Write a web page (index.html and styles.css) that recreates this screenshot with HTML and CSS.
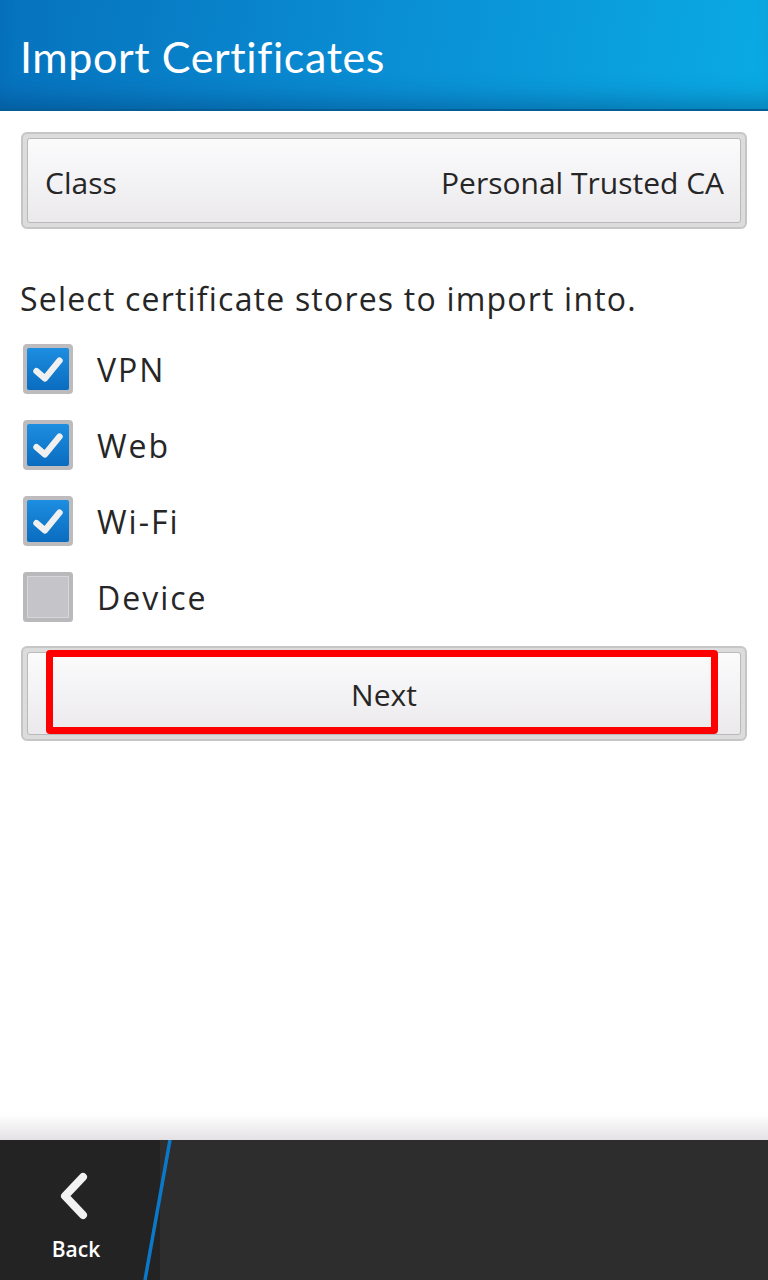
FILE: index.html
```html
<!DOCTYPE html>
<html lang="en">
<head>
    <meta charset="UTF-8">
    <meta name="viewport" content="width=device-width, initial-scale=1.0">
    <title>Import Certificates</title>
    <link rel="stylesheet" href="styles.css">
</head>
<body>
    <div class="screen">
        <div class="titlebar">
            <h1>Import Certificates</h1>
        </div>

        <div class="content">
            <div class="dropdown">
                <div class="dropdown-inner">
                    <span>Class</span>
                    <span>Personal Trusted CA</span>
                </div>
            </div>

            <p class="intro">Select certificate stores to import into.</p>

            <div class="checklist">
                <div class="check-row">
                    <span class="box checked">
                        <svg viewBox="0 0 40 40" width="40" height="40"><path d="M9 22 L17 29 L31 12" fill="none" stroke="#f0f0f0" stroke-width="6" stroke-linecap="round" stroke-linejoin="round"/></svg>
                    </span>
                    <span class="label">VPN</span>
                </div>
                <div class="check-row">
                    <span class="box checked">
                        <svg viewBox="0 0 40 40" width="40" height="40"><path d="M9 22 L17 29 L31 12" fill="none" stroke="#f0f0f0" stroke-width="6" stroke-linecap="round" stroke-linejoin="round"/></svg>
                    </span>
                    <span class="label">Web</span>
                </div>
                <div class="check-row">
                    <span class="box checked">
                        <svg viewBox="0 0 40 40" width="40" height="40"><path d="M9 22 L17 29 L31 12" fill="none" stroke="#f0f0f0" stroke-width="6" stroke-linecap="round" stroke-linejoin="round"/></svg>
                    </span>
                    <span class="label">Wi-Fi</span>
                </div>
                <div class="check-row">
                    <span class="box"></span>
                    <span class="label">Device</span>
                </div>
            </div>

            <div class="button">
                <div class="button-inner">
                    <span class="highlight"></span>
                    Next
                </div>
            </div>
        </div>

        <div class="actionbar">
            <div class="back">
                <svg viewBox="0 0 40 50" width="40" height="50"><path d="M28 6 L10 25 L28 44" fill="none" stroke="#f2f2f2" stroke-width="8" stroke-linecap="round" stroke-linejoin="round"/></svg>
                <span>Back</span>
            </div>
            <svg class="divider" viewBox="0 0 30 140" width="30" height="140"><line x1="27" y1="0" x2="2" y2="140" stroke="#0b79c9" stroke-width="3.5"/></svg>
        </div>
    </div>
</body>
</html>
```

FILE: styles.css
```css
* {
    box-sizing: border-box;
}
body {
    margin: 0;
    font-family: "Open Sans", Lato, sans-serif;
    color: #262626;
    background: #fff;
}
.screen {
    width: 768px;
    height: 1280px;
    display: flex;
    flex-direction: column;
    overflow: hidden;
}
.titlebar {
    height: 111px;
    flex: none;
    background: linear-gradient(100deg, #0672bd 0%, #0a8ed4 50%, #0aabe4 100%);
    border-bottom: 2px solid #055d96;
    box-shadow: inset 0 -22px 24px -14px rgba(0, 40, 90, 0.35);
    display: flex;
    align-items: center;
    padding: 4px 20px 0;
}
.titlebar h1 {
    margin: 0;
    color: #fff;
    font-family: Lato, "Open Sans", sans-serif;
    font-weight: 400;
    font-size: 43px;
    letter-spacing: 0.6px;
}
.content {
    flex: 1;
    padding: 21px 21px 0 21px;
    background: linear-gradient(#fff 0%, #fff 97.5%, #e3e1e4 100%);
}
.dropdown, .button {
    border: 2px solid #c6c6c6;
    border-radius: 6px;
    padding: 4px 4px;
    background: #dcdcdc;
    width: 726px;
}
.dropdown-inner, .button-inner {
    border: 1px solid #b9b9b9;
    border-radius: 3px;
    background: linear-gradient(#fbfbfc, #ebe9ec);
    height: 85px;
    display: flex;
    align-items: center;
    font-size: 30px;
    color: #262626;
}
.dropdown-inner {
    justify-content: space-between;
    padding: 3px 16px 0 17px;
}
.intro {
    margin: 50px 0 0 -1px;
    font-size: 32px;
    letter-spacing: 1.2px;
    line-height: 40px;
}
.checklist {
    margin-top: 25px;
    display: flex;
    flex-direction: column;
    gap: 26px;
}
.check-row {
    display: flex;
    align-items: center;
    height: 50px;
}
.box {
    width: 50px;
    height: 50px;
    border-radius: 4px;
    background: #bdbbbe;
    padding: 4px;
    margin-left: 2px;
    display: flex;
}
.box:not(.checked) {
    box-shadow: inset 0 0 0 4px #b9b8bb, inset 0 0 0 5px #d6d5d8;
    background-color: #c5c4c8;
}
.box.checked svg {
    background: linear-gradient(#1d8ee0, #0a6cc0);
    border-radius: 2px;
    width: 42px;
    height: 42px;
}
.label {
    margin-left: 24px;
    font-size: 32px;
    letter-spacing: 2px;
}
.button {
    margin-top: 24px;
}
.button-inner {
    justify-content: center;
    position: relative;
    height: 83px;
    padding-top: 2px;
}
.highlight {
    position: absolute;
    left: 18px;
    right: 22px;
    top: -3px;
    bottom: 0;
    border: 7px solid #ff0000;
    border-radius: 4px;
}
.actionbar {
    height: 140px;
    flex: none;
    background: #2e2d2e;
    display: flex;
    position: relative;
}
.back {
    width: 160px;
    background: #242324;
    display: flex;
    flex-direction: column;
    align-items: center;
    padding-top: 31px;
    padding-right: 8px;
    color: #fff;
}
.back svg {
    margin-left: -2px;
}
.back span {
    font-family: "Open Sans", Lato, sans-serif;
    font-weight: 600;
    font-size: 21px;
    margin-top: 14px;
}
.divider {
    position: absolute;
    left: 143px;
    top: 0;
}
```
